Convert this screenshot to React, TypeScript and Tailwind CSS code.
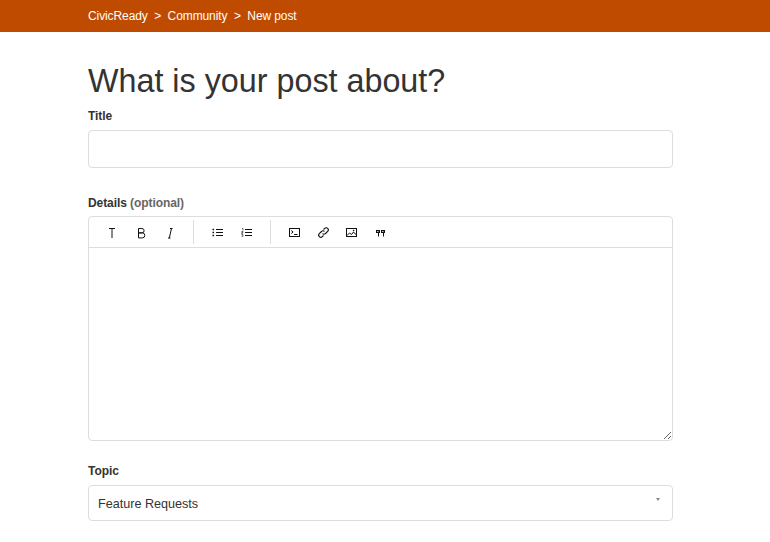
import React from "react";

function Btn({ children, className = "w-[29px]" }: { children: React.ReactNode; className?: string }) {
  return <button className={`${className} h-[30px] flex items-center justify-center text-[#111]`}>{children}</button>;
}

function Ico({ children, className }: { children: React.ReactNode; className?: string }) {
  return (
    <svg width="13" height="13" viewBox="0 0 13 13" fill="none" stroke="currentColor" strokeWidth="1" className={className}>
      {children}
    </svg>
  );
}

export default function App() {
  return (
    <div className="h-[542px] overflow-hidden bg-white font-['Liberation_Sans',Arial,sans-serif] text-[#333]">
      <nav className="h-8 bg-[#bf4b00] pl-[88px] flex items-center text-xs text-white tracking-[-0.1px]">
        <span>CivicReady</span>
        <span className="mx-[6.5px]">&gt;</span>
        <span>Community</span>
        <span className="mx-[6.5px]">&gt;</span>
        <span>New post</span>
      </nav>
      <main className="w-[585px] ml-[88px]">
        <h1 className="mt-[29px] text-[32.3px] leading-[40px] font-normal">What is your post about?</h1>
        <label className="block mt-[5px] text-xs leading-[20px] font-bold tracking-[-0.05px]">Title</label>
        <input className="block mt-[4px] w-full h-[38px] border border-[#ddd] rounded-[4px] outline-none" />
        <label className="block mt-[25px] text-xs leading-[20px] font-bold tracking-[-0.08px]">
          Details <span className="text-[#666]">(optional)</span>
        </label>
        <div className="mt-[3px] border border-[#ddd] rounded-[4px] overflow-hidden">
          <div className="h-[30px] border-b border-[#ddd] box-content flex items-center pl-[9px]">
            <Btn>
              <Ico><path d="M3 2.5h6M6 2.5v9.5" /></Ico>
            </Btn>
            <Btn>
              <Ico><path d="M3.5 2.5h3.4a2.2 2.2 0 0 1 0 4.4H3.5zM3.5 6.9h3.8a2.5 2.5 0 0 1 0 5H3.5z" /></Ico>
            </Btn>
            <Btn>
              <Ico><path d="M6 2.5h2.5M7.5 2.5l-2.2 9.5M4 12h2.5" /></Ico>
            </Btn>
            <div className="w-px h-[24px] bg-[#ddd] ml-[8px] mr-[9px]" />
            <Btn>
              <Ico>
                <path d="M5 3.5h7M5 6.5h7M5 9.5h7" />
                <path d="M1.5 2.7h1.6v1.6H1.5zM1.5 5.7h1.6v1.6H1.5zM1.5 8.7h1.6v1.6H1.5z" fill="currentColor" stroke="none" />
              </Ico>
            </Btn>
            <Btn>
              <Ico>
                <path d="M5 3.5h7M5 6.5h7M5 9.5h7" />
                <path d="M2 2.5h1v2M1.5 5.5h1.5v1.2H1.7v1.1H3M1.5 8.7H3v1.6H1.5" strokeWidth="0.6" />
              </Ico>
            </Btn>
            <div className="w-px h-[24px] bg-[#ddd] ml-[9px] mr-[9px]" />
            <Btn>
              <Ico>
                <rect x="1.5" y="2.5" width="10" height="8" />
                <path d="M3.3 4.5l1.8 1.5-1.8 1.5M6 8.5h3.5" />
              </Ico>
            </Btn>
            <Btn className="w-[28px]">
              <Ico>
                <path d="M5.5 7.5a2 2 0 0 0 3 0l2.2-2.2a2 2 0 0 0-3-3l-1.2 1.2" strokeWidth="1.1" />
                <path d="M7.5 5.5a2 2 0 0 0-3 0l-2.2 2.2a2 2 0 0 0 3 3l1.2-1.2" strokeWidth="1.1" />
              </Ico>
            </Btn>
            <Btn>
              <Ico>
                <rect x="1.5" y="2.5" width="10" height="8" />
                <path d="M2 9.5l2.5-2.5 2 1.5 2-2.5 3 3" />
                <circle cx="8.6" cy="4.6" r="0.8" fill="currentColor" stroke="none" />
              </Ico>
            </Btn>
            <Btn>
              <svg width="11" height="9" viewBox="0 0 11 9" fill="currentColor" className="translate-y-[1px]">
                <path d="M1 1h4v3H4v3.5H3V4H1zM6 1h4v3H9v3.5H8V4H6z" />
                <path d="M2 2h1.6v0.8H2zM7 2h1.6v0.8H7z" fill="white" />
              </svg>
            </Btn>
          </div>
          <textarea className="block w-full h-[192px] outline-none resize-y" />
        </div>
        <label className="block mt-[20px] text-xs leading-[20px] font-bold tracking-[-0.05px]">Topic</label>
        <div className="relative mt-[4px]">
          <select className="block w-full h-[36px] appearance-none border border-[#ddd] rounded-[4px] pl-[9px] pt-[2px] text-[12.6px] bg-white text-[#333] outline-none">
            <option>Feature Requests</option>
          </select>
          <span className="absolute right-[13px] top-[13px] w-0 h-0 border-l-[2.5px] border-r-[2.5px] border-t-[3px] border-l-transparent border-r-transparent border-t-[#888]" />
        </div>
      </main>
    </div>
  );
}
